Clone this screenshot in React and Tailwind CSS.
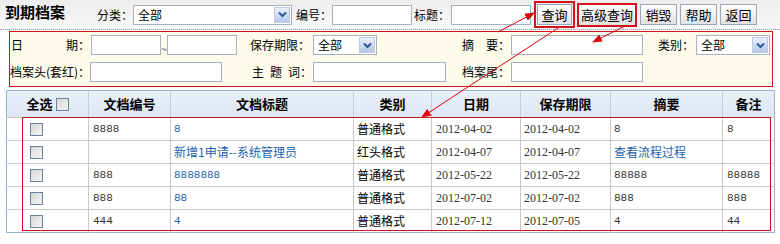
import React from "react";

const Chevron = () => (
  <svg width="9" height="7" viewBox="0 0 9 7">
    <path d="M1 1.5 L4.5 5 L8 1.5" stroke="#34569a" strokeWidth="2" fill="none" />
  </svg>
);

function Select({ className }) {
  return (
    <div className={"flex h-[20px] items-center border border-[#a7b1bf] bg-white " + className}>
      <span className="flex-1 pl-[4px] text-[12px] leading-none text-black">全部</span>
      <span className="mr-[1px] flex h-[16px] w-[16px] items-center justify-center border border-[#bccbe3] bg-gradient-to-b from-[#e9f0fb] to-[#b6c8e8]">
        <Chevron />
      </span>
    </div>
  );
}

function Box({ className }) {
  return <div className={"h-[20px] border border-[#a7b1bf] bg-white " + className} />;
}

function Check() {
  return <span className="block h-[13px] w-[13px] border border-[#6f8197] bg-gradient-to-br from-[#d8d8d8] to-[#f4f4f4]" />;
}

const btn =
  "flex h-[21px] items-center justify-center border border-[#9ca7b6] bg-gradient-to-b from-white to-[#e2e2e2] text-[13px] text-black";

const rows = [
  { no: "8888", title: "8", cat: "普通格式", date: "2012-04-02", keep: "2012-04-02", sum: "8", note: "8" },
  { no: "", title: "新增1申请--系统管理员", cat: "红头格式", date: "2012-04-07", keep: "2012-04-07", sum: "查看流程过程", link: true, note: "" },
  { no: "888", title: "8888888", cat: "普通格式", date: "2012-05-22", keep: "2012-05-22", sum: "88888", note: "88888" },
  { no: "888", title: "88", cat: "普通格式", date: "2012-07-02", keep: "2012-07-02", sum: "888", note: "888" },
  { no: "444", title: "4", cat: "普通格式", date: "2012-07-12", keep: "2012-07-05", sum: "4", note: "44" },
];

const heads = ["文档编号", "文档标题", "类别", "日期", "保存期限", "摘要", "备注"];

export default function App() {
  return (
    <div className="relative h-[244px] w-[780px] overflow-hidden bg-white font-['Noto_Sans_CJK_SC',sans-serif] text-[12px] text-[#222]">
      {/* title bar */}
      <div className="flex h-[30px] items-center border-b border-dotted border-[#9a9a9a] bg-gradient-to-b from-[#ededed] to-[#f8f8f8]">
        <div className="ml-[5px] w-[60px] self-start pt-[3px] text-[15px] font-bold leading-[18px] text-black">到期档案</div>
        <span className="ml-[32px] w-[36px] text-black">分类：</span>
        <Select className="w-[159px]" />
        <span className="ml-[4px] w-[36px] text-black">编号：</span>
        <Box className="w-[80px]" />
        <span className="ml-[2px] w-[37px] text-black">标题：</span>
        <Box className="w-[80px]" />
        <div className="ml-[3px] border-2 border-[#d4141c] p-[1px]">
          <div className={btn + " w-[35px]"}>查询</div>
        </div>
        <div className={"ml-[2px] flex h-[24px] w-[60px] items-center justify-center border-2 border-[#d4141c] bg-gradient-to-b from-white to-[#e2e2e2] text-[13px] text-black"}>
          高级查询
        </div>
        <div className={btn + " ml-[3px] w-[37px]"}>销毁</div>
        <div className={btn + " ml-[3px] w-[37px]"}>帮助</div>
        <div className={btn + " ml-[3px] w-[37px]"}>返回</div>
      </div>

      {/* advanced panel */}
      <div className="ml-[9px] mt-[1px] flex h-[56px] w-[764px] flex-col gap-[7px] border border-[#d0121b] bg-[#fdfbea] pt-[3px] text-black">
        <div className="flex items-center">
          <span className="flex w-[81px] justify-between pl-[1px] pr-[1px]">
            <span>日</span>
            <span>期：</span>
          </span>
          <Box className="w-[70px]" />
          <span className="w-[6px] self-end text-center text-[10px] leading-[12px] text-[#555]">~</span>
          <Box className="w-[70px]" />
          <span className="ml-[13px] w-[63px] whitespace-nowrap">保存期限：</span>
          <Select className="w-[64px]" />
          <span className="ml-[85px] flex w-[49px] justify-between pr-[1px]">
            <span>摘</span>
            <span>要：</span>
          </span>
          <Box className="w-[132px]" />
          <span className="ml-[15px] w-[38px]">类别：</span>
          <Select className="w-[74px]" />
        </div>
        <div className="flex items-center">
          <span className="w-[80px] whitespace-nowrap">档案头(套红)：</span>
          <Box className="w-[132px]" />
          <span className="ml-[28px] flex w-[63px] justify-between pl-[2px] pr-[1px]">
            <span>主</span>
            <span>题</span>
            <span>词：</span>
          </span>
          <Box className="w-[133px]" />
          <span className="ml-[16px] w-[49px] whitespace-nowrap">档案尾：</span>
          <Box className="w-[132px]" />
        </div>
      </div>

      {/* table */}
      <table className="ml-[6px] mt-[3px] w-[768px] table-fixed border-collapse border border-[#9db0cc]">
        <colgroup>
          <col className="w-[82px]" />
          <col className="w-[82px]" />
          <col className="w-[183px]" />
          <col className="w-[78px]" />
          <col className="w-[89px]" />
          <col className="w-[90px]" />
          <col className="w-[112px]" />
          <col className="w-[52px]" />
        </colgroup>
        <thead>
          <tr className="h-[27px] bg-gradient-to-b from-[#e8eff9] to-[#dde7f4]">
            <th className="border-r border-[#c3cedc] p-0">
              <div className="flex items-center justify-center gap-[3px] text-[13px] font-bold text-black">
                <span>全选</span>
                <Check />
              </div>
            </th>
            {heads.map((h, i) => (
              <th
                key={h}
                className={
                  (i < heads.length - 1 ? "border-r border-[#c3cedc] " : "") +
                  "p-0 text-center text-[13px] font-bold text-black"
                }
              >
                {h}
              </th>
            ))}
          </tr>
        </thead>
        <tbody>
          {rows.map((r, i) => (
            <tr key={i} className="h-[23px] border-t border-[#c9c9c9]">
              <td className="border-r border-[#c9c9c9] pl-[23px]">
                <Check />
              </td>
              <td className="border-r border-[#c9c9c9] pl-[4px] font-['Liberation_Mono',monospace] text-[11px] text-[#333]">{r.no}</td>
              <td className={"border-r border-[#c9c9c9] pl-[3px] text-[#2462ad] " + (/^\d+$/.test(r.title) ? "font-['Liberation_Mono',monospace] text-[11px]" : "text-[12px]")}>
                {r.title}
              </td>
              <td className="border-r border-[#c9c9c9] pl-[3px] text-[12px] text-black">{r.cat}</td>
              <td className="border-r border-[#c9c9c9] pl-[4px] font-['Liberation_Serif',serif] text-[12px] text-[#333]">{r.date}</td>
              <td className="border-r border-[#c9c9c9] pl-[3px] font-['Liberation_Serif',serif] text-[12px] text-[#333]">{r.keep}</td>
              <td className={"border-r border-[#c9c9c9] pl-[3px] " + (r.link ? "text-[12px] text-[#1f5fab]" : "font-['Liberation_Mono',monospace] text-[11px] text-[#333]")}>
                {r.sum}
              </td>
              <td className="pl-[4px] font-['Liberation_Mono',monospace] text-[11px] text-[#333]">{r.note}</td>
            </tr>
          ))}
        </tbody>
      </table>

      {/* annotation overlay */}
      <svg className="pointer-events-none absolute left-0 top-0" width="780" height="244" viewBox="0 0 780 244">
        <defs>
          <marker id="ah" markerWidth="10" markerHeight="8" refX="9" refY="4" orient="auto" markerUnits="userSpaceOnUse">
            <path d="M0 0 L10 4 L0 8 Z" fill="#e00010" />
          </marker>
        </defs>
        <rect x="22.5" y="117.5" width="748" height="113" fill="none" stroke="#d0101a" strokeWidth="1" />
        <line x1="498" y1="32" x2="534" y2="13" stroke="#e00010" strokeWidth="1" markerEnd="url(#ah)" />
        <line x1="558" y1="28" x2="422" y2="117" stroke="#e00010" strokeWidth="1" markerEnd="url(#ah)" />
        <line x1="627" y1="25" x2="593" y2="42" stroke="#e00010" strokeWidth="1" markerEnd="url(#ah)" />
      </svg>
    </div>
  );
}
